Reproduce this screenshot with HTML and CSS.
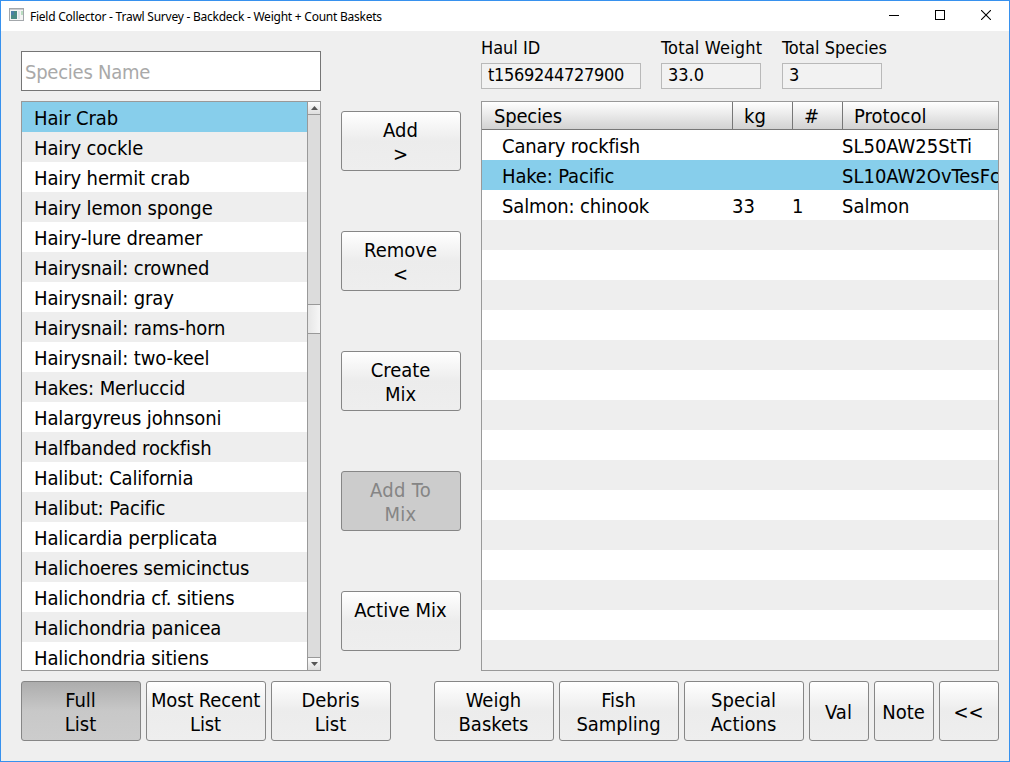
FILE: index.html
```
<!DOCTYPE html>
<html lang="en">
<head>
<meta charset="utf-8">
<title>Field Collector</title>
<link rel="stylesheet" href="styles.css">
</head>
<body>
<div class="window">
  <header class="titlebar">
    <svg class="app-icon" width="15" height="13" viewBox="0 0 15 13">
      <rect x=".5" y=".5" width="14" height="12" fill="#f4f4f4" stroke="#a3a7ab"/>
      <rect x="1" y="1" width="13" height="1" fill="#c9ccd0"/>
      <rect x="2" y="3" width="6" height="8" fill="#4a8a85"/>
      <rect x="2" y="3" width="3" height="4" fill="#4c7fa6"/>
      <rect x="9" y="3" width="2" height="8" fill="#dfe3e8"/>
      <rect x="12" y="3" width="2" height="4" fill="#b9dcc0"/>
    </svg>
    <span class="title">Field Collector - Trawl Survey - Backdeck - Weight + Count Baskets</span>
    <div class="controls">
      <svg width="10" height="10"><path d="M0 5.5h10" stroke="#000"/></svg>
      <svg width="10" height="10"><rect x=".5" y=".5" width="9" height="9" fill="none" stroke="#000"/></svg>
      <svg width="10" height="10"><path d="M0 0L10 10M10 0L0 10" stroke="#000" stroke-width="1.1"/></svg>
    </div>
  </header>
  <main class="content">
    <section class="picker">
      <input class="search" placeholder="Species Name">
      <div class="list-frame">
        <ul class="list">
          <li class="selected">Hair Crab</li><li>Hairy cockle</li><li>Hairy hermit crab</li><li>Hairy lemon sponge</li><li>Hairy-lure dreamer</li><li>Hairysnail: crowned</li><li>Hairysnail: gray</li><li>Hairysnail: rams-horn</li><li>Hairysnail: two-keel</li><li>Hakes: Merluccid</li><li>Halargyreus johnsoni</li><li>Halfbanded rockfish</li><li>Halibut: California</li><li>Halibut: Pacific</li><li>Halicardia perplicata</li><li>Halichoeres semicinctus</li><li>Halichondria cf. sitiens</li><li>Halichondria panicea</li><li>Halichondria sitiens</li>
        </ul>
        <div class="scrollbar">
          <div class="arrow up"><svg width="7" height="4"><path d="M0 4L3.5 0L7 4z" fill="#555"/></svg></div>
          <div class="track-before"></div>
          <div class="thumb"></div>
          <div class="track-after"></div>
          <div class="arrow down"><svg width="7" height="4"><path d="M0 0L3.5 4L7 0z" fill="#555"/></svg></div>
        </div>
      </div>
    </section>
    <section class="actions">
      <button class="btn">Add<br>&gt;</button>
      <button class="btn">Remove<br>&lt;</button>
      <button class="btn">Create<br>Mix</button>
      <button class="btn" disabled>Add To<br>Mix</button>
      <button class="btn">Active Mix<br>&nbsp;</button>
    </section>
    <section class="catch">
      <div class="summary">
        <div class="field haul"><label>Haul ID</label><div class="value">t1569244727900</div></div>
        <div class="field weight"><label>Total Weight</label><div class="value">33.0</div></div>
        <div class="field count"><label>Total Species</label><div class="value">3</div></div>
      </div>
      <div class="table">
        <div class="thead"><span>Species</span><span>kg</span><span>#</span><span>Protocol</span></div>
        <div class="row"><span>Canary rockfish</span><span></span><span></span><span>SL50AW25StTi</span></div>
        <div class="row selected"><span>Hake: Pacific</span><span></span><span></span><span>SL10AW2OvTesFc</span></div>
        <div class="row"><span>Salmon: chinook</span><span>33</span><span>1</span><span>Salmon</span></div>
        <div class="empty"></div>
      </div>
    </section>
  </main>
  <footer class="footer">
    <button class="btn checked">Full<br>List</button>
    <button class="btn recent">Most Recent<br>List</button>
    <button class="btn">Debris<br>List</button>
    <span class="spacer"></span>
    <button class="btn">Weigh<br>Baskets</button>
    <button class="btn">Fish<br>Sampling</button>
    <button class="btn">Special<br>Actions</button>
    <button class="btn small">Val</button>
    <button class="btn small">Note</button>
    <button class="btn small">&lt;&lt;</button>
  </footer>
</div>
</body>
</html>
```

FILE: styles.css
```
* { box-sizing: border-box; }
body { margin: 0; font-family: "DejaVu Sans Condensed", "DejaVu Sans", sans-serif; font-stretch: condensed; font-size: 20px; color: #000; }
.window { width: 1010px; height: 762px; border: 1px solid #3791ee; background: #efefef; display: flex; flex-direction: column; overflow: hidden; }
.titlebar { height: 30px; flex: none; background: #fff; display: flex; align-items: center; padding: 0 18px 0 8px; }
.app-icon { margin-top: -3px; }
.title { margin-left: 6px; font-family: "Noto Sans", sans-serif; font-stretch: normal; font-size: 12px; letter-spacing: -0.24px; white-space: nowrap; }
.controls { margin-left: auto; display: flex; gap: 36px; margin-top: -2px; }
.controls svg { display: block; }
.content { display: flex; gap: 20px; padding: 0 10px 0 20px; height: 640px; flex: none; }
.picker { width: 300px; padding-top: 20px; }
.search { display: block; width: 300px; height: 40px; border: 1px solid #757575; background: #fff; padding: 1px 3px 0; font: inherit; letter-spacing: -0.25px; border-radius: 0; outline: 0; }
.search::placeholder { color: #a9a9a9; opacity: 1; }
.list-frame { margin-top: 10px; height: 570px; border: 1px solid #999; display: flex; overflow: hidden; }
.list { list-style: none; margin: 0; padding: 0; flex: 1; background: #fff; }
.list li { height: 30px; line-height: 32px; padding-left: 12px; white-space: nowrap; letter-spacing: -0.12px; }
.list li:nth-child(even) { background: #eee; }
.list .selected, .row.selected { background: #87ceeb; }
.scrollbar { width: 13px; border-left: 1px solid #999; background: #dcdcdc; display: flex; flex-direction: column; }
.arrow { height: 13px; flex: none; display: flex; align-items: center; justify-content: center; background: linear-gradient(#fcfcfc, #dedede); }
.up { border-bottom: 1px solid #999; }
.down { border-top: 1px solid #999; }
.track-before { height: 189px; }
.thumb { height: 30px; border: solid #999; border-width: 1px 0; background: linear-gradient(90deg, #e6e6e6, #f6f6f6); }
.track-after { flex: 1; }
.actions { width: 120px; padding-top: 80px; display: flex; flex-direction: column; gap: 60px; }
.btn { width: 120px; height: 60px; flex: none; padding: 1px 1px 0 0; margin: 0; font: inherit; line-height: 24px; color: #000; white-space: nowrap; border: 1px solid #868686; border-radius: 3px; background: linear-gradient(#fff, #ececec 50%, #eee); }
.btn:disabled { color: #858585; background: #ccc; letter-spacing: 0.3px; }
.btn.checked { background: linear-gradient(#adadad, #c8c8c8 50%, #ccc); }
.btn.recent { letter-spacing: -0.15px; }
.btn.small { width: 60px; }
.catch { width: 518px; }
.summary { height: 70px; display: flex; gap: 20px; padding-top: 4px; font-size: 18px; }
.field { width: 100px; white-space: nowrap; }
.haul { width: 160px; }
.weight label { letter-spacing: 0.2px; }
.count { margin-left: 1px; }
.field label { display: block; height: 28px; line-height: 25px; }
.value { height: 26px; line-height: 21px; border: 1px solid #b9b9b9; background: #f2f2f2; padding-left: 6px; }
.haul .value { letter-spacing: -0.3px; }
.table { height: 570px; border: 1px solid #999; background: #fff; overflow: hidden; display: flex; flex-direction: column; }
.thead, .row { display: grid; grid-template-columns: 250px 60px 50px 156px; flex: none; white-space: nowrap; }
.thead { height: 28px; line-height: 28px; grid-template-columns: 251px 60px 50px 154px; background: linear-gradient(#fff, #d2d2d2); border-bottom: 1px solid #777; }
.thead span { height: 27px; border-right: 1px solid #777; padding-left: 11px; }
.thead span:first-child { letter-spacing: -0.2px; padding-left: 12px; }
.thead span:last-child { border-right: 0; }
.row { height: 30px; line-height: 32px; }
.row span:first-child { padding-left: 20px; letter-spacing: -0.15px; }
.empty { flex: 1; background: repeating-linear-gradient(#eee 0 30px, #fff 30px 60px); }
.footer { display: flex; gap: 5px; padding: 10px 10px 0 20px; }
.spacer { flex: 1; }
```
